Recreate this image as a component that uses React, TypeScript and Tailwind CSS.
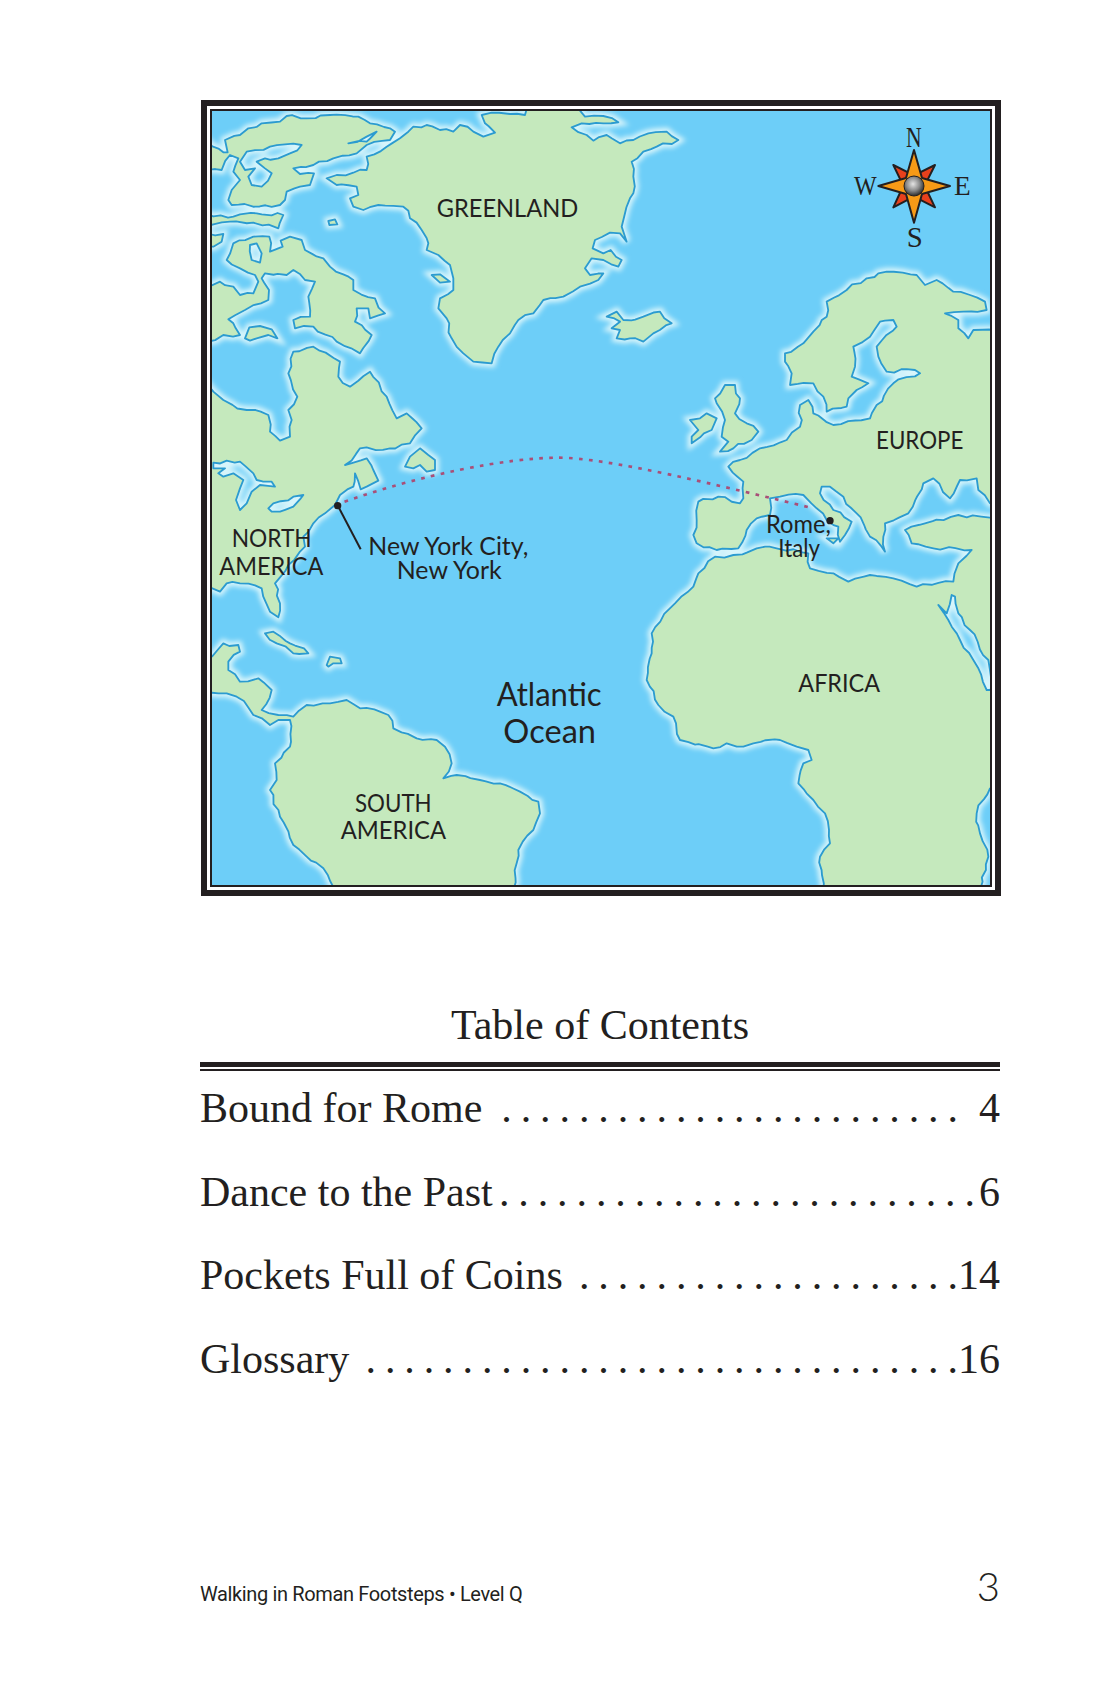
const COAST: [number, number, string][] = [
  // greenland
  [0, 0, "630 145 655 125 670 110 710 105 750 120 790 125 810 105 850 125 880 140 915 128 885 100 875 75 905 68 960 72 1005 75 1012 50 1160 50 1185 80 1240 78 1285 97 1240 100 1175 100 1145 112 1190 135 1210 152 1250 135 1265 145 1290 160 1330 150 1375 130 1430 125 1465 150 1400 170 1360 185 1325 215 1330 260 1330 310 1305 370 1295 410 1310 455 1290 430 1260 428 1215 450 1208 475 1240 490 1262 480 1295 510 1285 530 1240 510 1205 505 1185 535 1200 555 1240 550 1225 570 1170 590 1120 620 1060 630 1030 670 985 690 960 730 925 770 905 820 850 815 820 790 785 745 770 685 745 655 750 625 790 600 790 565 780 525 745 495 710 480 715 460 695 420 660 385 640 350 565 345 520 360 490 350 480 325 505 315 500 290 440 285 410 265 440 255 530 240 530 200 590 170"],
  [0, 0, "725 555 750 553 780 575 750 578"],
  // arctic islands
  [0, 0, "50 152 100 187 113 187 105 150 150 135 175 115 215 100 270 95 290 78 350 85 420 75 505 80 540 100 600 115 615 125 600 150 530 165 500 190 430 205 370 225 310 235 330 252 372 250 360 285 330 290 290 305 285 330 270 345 125 345 115 330 125 300 150 270 130 245 145 205 120 195 95 240 50 240"],
  [0, 0, "150 215 170 185 240 170 335 165 300 190 265 205 225 205 200 215 245 250 215 290 185 285 175 260 195 235 165 240"],
  [0, 0, "475 160 530 140 560 125 530 155"],
  [0, 0, "50 372 130 380 200 370 280 375 265 415 190 398 120 395 50 408"],
  [0, 0, "50 430 100 432 95 455 70 470 50 470"],
  [0, 0, "50 755 100 735 150 735 130 700 115 688 165 660 235 630 237 600 215 565 225 550 290 555 310 540 345 570 375 575 355 620 360 680 310 690 315 715 370 710 440 755 510 790 545 735 495 695 500 655 535 655 540 685 585 670 555 625 490 600 490 570 420 530 400 505 345 480 335 450 300 440 272 452 278 470 240 485 238 440 190 440 130 460 110 510 150 535 195 555 205 575 190 610 150 615 130 590 90 575 50 600"],
  [0, 0, "180 465 200 460 215 490 210 518 185 510"],
  [0, 0, "165 745 178 712 210 708 245 718 262 745 235 735 200 745 180 752"],
  [0, 0, "415 393 435 388 442 403 418 405"],
  // north america, hudson bay down to the gulf
  [0, 0, "50 880 70 905 100 930 170 960 235 975 240 1025 270 1052 300 1040 305 990 295 960 322 920 295 850 310 785 370 770 450 815 445 860 480 890 540 845 590 920 620 985 650 970 695 1015 660 1060 600 1075 510 1075 465 1125 530 1105 550 1140 565 1172 530 1190 512 1198 495 1150 490 1190 450 1215 435 1245 405 1270 370 1300 340 1340 345 1370 295 1425 255 1480 270 1540 265 1582 240 1565 215 1495 150 1480 110 1480 90 1505 50 1495"],
  [0, 0, "70 1118 110 1112 150 1115 190 1150 200 1170 245 1175 255 1190 210 1185 185 1205 170 1240 150 1260 138 1230 150 1195 160 1170 130 1150 100 1160 85 1150 105 1135 70 1135"],
  [0, 0, "235 1255 250 1240 310 1220 340 1215 310 1250 270 1265 245 1265"],
  [0, 0, "645 1130 660 1100 690 1075 715 1095 735 1110 735 1140 710 1145 690 1125 670 1135"],
  // caribbean
  [0, 1170, "225 460 250 455 300 490 355 520 310 520 260 490"],
  [0, 1170, "410 555 420 530 450 535 455 550 430 550 415 560"],
  // central and south america
  [0, 1170, "50 540 100 490 145 495 150 515 115 545 115 570 150 605 205 595 245 630 215 690 265 705 310 710 350 675 420 670 470 660 510 685 570 695 595 705 610 745 680 775 740 780 765 800 785 850 760 895 800 885 870 900 930 910 990 935 1045 965 1050 1000 1030 1050 985 1110 970 1230 435 1230 400 1165 350 1130 310 1095 270 1010 240 930 260 900 255 850 300 800 300 720 265 720 240 735 190 705 140 650 110 640 50 640"],
  // iceland, britain
  [1230, 0, "20 680 50 665 70 690 130 680 180 665 215 700 160 730 130 755 90 745 50 745 60 720 35 715 60 695"],
  [1230, 0, "345 925 375 885 405 885 420 925 405 970 440 1000 475 1025 455 1050 400 1075 360 1085 385 1055 365 1040 375 990 350 940"],
  [1230, 0, "270 990 300 985 320 970 350 985 335 1020 275 1060 275 1040 295 1020"],
  // europe
  [1230, 0, "555 790 610 760 640 725 680 680 680 635 740 600 800 565 860 545 950 555 975 585 1010 570 1060 605 1110 615 1155 635 1160 660 1090 665 1035 670 1075 690 1075 715 1105 745 1120 720 1190 725 1190 1240 1170 1240 1135 1200 1130 1165 1080 1170 1050 1225 1000 1165 970 1180 925 1270 855 1300 850 1340 855 1385 810 1340 770 1270 730 1220 690 1190 665 1190 660 1210 700 1260 755 1295 735 1335 720 1355 715 1310 680 1290 650 1255 610 1215 540 1220 510 1225 510 1275 470 1285 440 1320 415 1375 350 1380 290 1360 280 1335 290 1290 295 1235 355 1220 420 1240 430 1225 430 1175 385 1130 420 1110 480 1075 560 1050 600 1010 600 945 625 930 640 970 700 1005 810 985 830 945 880 880 960 850 945 840 860 845 835 800 830 770 890 710 880 690 840 695 810 740 760 770 765 830 755 860 805 880 770 900 745 925 740 950 680 965 670 920 640 880 570 885 575 850 555 815"],
  [1230, 1170, "680 175 715 175 700 190"],
  // africa
  [1230, 1170, "345 230 400 225 470 205 530 205 625 220 630 265 700 280 745 305 810 285 880 295 950 320 1060 305 1075 250 1115 210 1000 205 935 190 915 150 975 130 1075 105 1190 115 1190 925 1170 925 1130 1000 1140 1060 1165 1130 1140 1230 670 1230 660 1130 690 1090 675 1000 640 960 595 910 610 850 635 840 625 810 590 800 540 780 460 790 430 800 380 790 340 805 240 780 220 710 175 675 140 600 155 520 155 460 225 370 280 320 295 280"],
  [1230, 1170, "1015 375 1040 400 1055 345 1065 350 1075 400 1110 450 1165 540 1172 630 1160 630 1120 540 1080 480 1045 420"],
];

// break long straight runs up a little so the coastlines read as hand drawn
function roughen(pts: number[]) {
  let seed = 7;
  const next = () => {
    seed = (seed * 1103515245 + 12345) % 2147483648;
    return seed / 2147483648 - 0.5;
  };
  const out: number[] = [];
  for (let i = 0; i < pts.length; i += 2) {
    const x1 = pts[i];
    const y1 = pts[i + 1];
    const x2 = pts[(i + 2) % pts.length];
    const y2 = pts[(i + 3) % pts.length];
    const steps = Math.max(1, Math.floor(Math.hypot(x2 - x1, y2 - y1) / 20));
    for (let s = 0; s < steps; s++) {
      const t = s / steps;
      const amp = s === 0 ? 0 : 11;
      out.push(x1 + (x2 - x1) * t + next() * amp, y1 + (y2 - y1) * t + next() * amp);
    }
  }
  return out;
}

const LANDS = COAST.map(([dx, dy, pts]) => {
  const n = roughen(pts.split(" ").map(Number));
  let d = "";
  for (let i = 0; i < n.length; i += 2) {
    d += `${i === 0 ? "M" : "L"}${(n[i] + dx).toFixed(1)} ${(n[i + 1] + dy).toFixed(1)} `;
  }
  return d + "Z";
}).join(" ");

const LABELS: [string, number, number, number, number][] = [
  ["GREENLAND", 740, 380, 425, 76],
  ["EUROPE", 2058, 1078, 262, 76],
  ["NORTH", 125, 1370, 240, 76],
  ["AMERICA", 88, 1455, 312, 76],
  ["New York City,", 535, 1395, 480, 76],
  ["New York", 620, 1468, 315, 76],
  ["Atlantic", 920, 1848, 315, 100],
  ["Ocean", 940, 1958, 278, 100],
  ["SOUTH", 495, 2165, 230, 76],
  ["AMERICA", 452, 2248, 316, 76],
  ["AFRICA", 1825, 1805, 245, 76],
  ["Rome,", 1728, 1328, 195, 76],
  ["Italy", 1765, 1402, 125, 76],
];

const COMPASS: [string, number, number, number, number][] = [
  ["N", 2148, 170, 47, 88],
  ["W", 1992, 316, 68, 84],
  ["E", 2292, 316, 50, 84],
  ["S", 2150, 470, 48, 88],
];

const TOC = [
  { title: "Bound for Rome", dots: 24, page: "4", gap: "mr-[21px]" },
  { title: "Dance to the Past", dots: 25, page: "6", gap: "mr-[4px]" },
  { title: "Pockets Full of Coins", dots: 20, page: "14", gap: "mr-0" },
  { title: "Glossary", dots: 31, page: "16", gap: "mr-0" },
];

function RouteMap() {
  return (
    <svg viewBox="66 63 2334 2322" className="block h-[774px] w-[778px] font-['Lato',sans-serif]">
      <defs>
        <filter id="halo" x="-5%" y="-5%" width="110%" height="110%">
          <feGaussianBlur stdDeviation="8" />
        </filter>
        <radialGradient id="ball" cx="45%" cy="40%" r="60%">
          <stop offset="0%" stopColor="#e4e4e4" />
          <stop offset="55%" stopColor="#8c8c8c" />
          <stop offset="100%" stopColor="#2c2c2c" />
        </radialGradient>
      </defs>
      <rect x="66" y="63" width="2334" height="2322" fill="#6dcef8" />
      <path d={LANDS} fill="none" stroke="#d8f5fb" strokeWidth="24" filter="url(#halo)" />
      <path d={LANDS} fill="#c5e9bd" fillRule="evenodd" stroke="#2b9bd0" strokeWidth="5.5" strokeLinejoin="round" />

      <path d="M435 1245 C700 1150 950 1105 1100 1103 S1600 1190 1870 1255" fill="none" stroke="#a94f78" strokeWidth="8" strokeDasharray="11 19" />
      <line x1="445" y1="1250" x2="512" y2="1378" stroke="#231f20" strokeWidth="6" />
      <circle cx="443" cy="1247" r="11" fill="#231f20" />
      <circle cx="1920" cy="1292" r="11" fill="#231f20" />

      <polygon points="2110,225 2160,250 2184,250 2235,225 2210,275 2210,300 2235,352 2184,326 2160,326 2110,352 2134,300 2134,275" fill="#e8401c" stroke="#231f20" strokeWidth="6" strokeLinejoin="round" />
      <polygon points="2172,180 2196,264 2280,288 2196,312 2172,398 2148,312 2065,288 2148,264" fill="#f79a16" stroke="#231f20" strokeWidth="6" strokeLinejoin="round" />
      <circle cx="2172" cy="288" r="30" fill="url(#ball)" stroke="#231f20" strokeWidth="3" />

      <g fill="#231f20" className="font-['Liberation_Serif',serif]">
        {COMPASS.map(([t, x, y, w, size]) => (
          <text key={t} x={x} y={y} fontSize={size} textLength={w} lengthAdjust="spacingAndGlyphs">
            {t}
          </text>
        ))}
      </g>

      <g fill="#231f20">
        {LABELS.map(([t, x, y, w, size]) => (
          <text key={t + x} x={x} y={y} fontSize={size} textLength={w} lengthAdjust="spacingAndGlyphs">
            {t}
          </text>
        ))}
      </g>
    </svg>
  );
}

export default function App() {
  return (
    <div className="h-[1700px] w-[1100px] bg-white pt-[100px] text-[#231f20]">
      <div className="ml-[201px] w-[800px] border-[6px] border-[#231f20] bg-white p-[3px]">
        <div className="border-2 border-[#231f20]">
          <RouteMap />
        </div>
      </div>

      <div className="ml-[200px] w-[800px] font-['Liberation_Serif',serif]">
        <h1 className="mt-[104px] text-center text-[42px] leading-[50px]">Table of Contents</h1>
        <div className="mt-[12px] h-[5px] bg-[#231f20]" />
        <div className="mt-[2px] h-[2px] bg-[#231f20]" />
        <div className="mt-[12px]">
          {TOC.map((row) => (
            <div key={row.title} className="flex h-[83.5px] items-baseline justify-between text-[42px] leading-[50px]">
              <span>{row.title}</span>
              <span className={"ml-auto " + row.gap}>
                <span className="tracking-[8.9px]">{".".repeat(row.dots - 1)}</span>.
              </span>
              <span>{row.page}</span>
            </div>
          ))}
        </div>
      </div>

      <div className="ml-[200px] mt-[139px] flex w-[800px] items-baseline justify-between">
        <span className="font-['Roboto',sans-serif] text-[20px] tracking-[-0.36px]">
          Walking in Roman Footsteps • Level Q
        </span>
        <span className="font-['Lato',sans-serif] text-[40px] font-light">3</span>
      </div>
    </div>
  );
}
